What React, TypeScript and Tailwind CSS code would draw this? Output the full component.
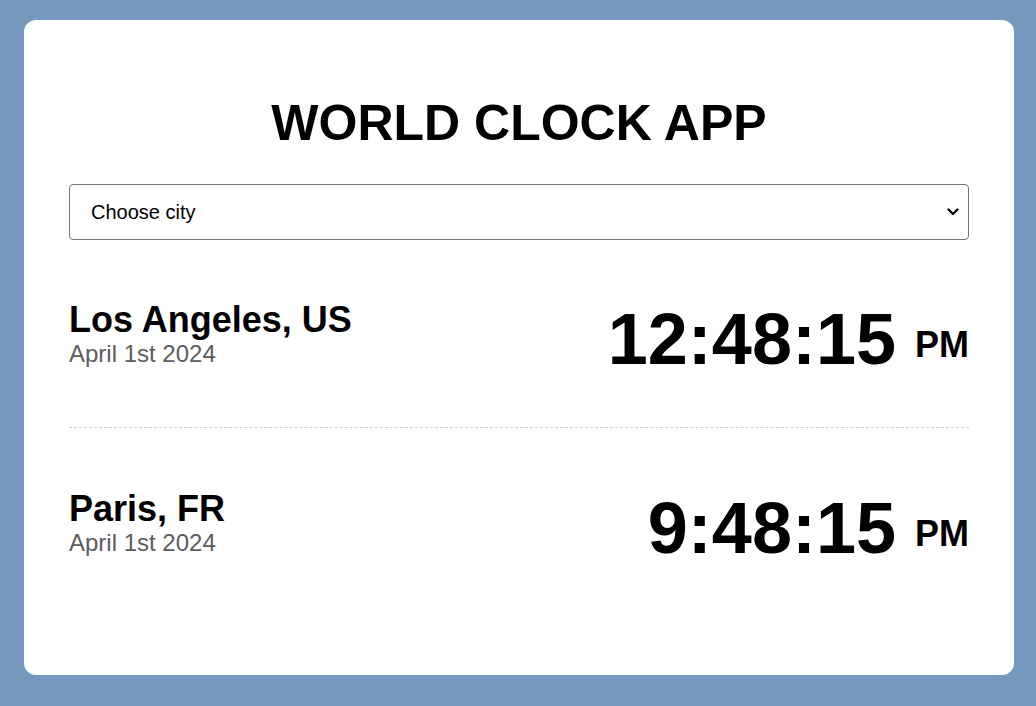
import React from 'react';

const cities = [
  { name: 'Los Angeles, US', date: 'April 1st 2024', time: '12:48:15', ampm: 'PM' },
  { name: 'Paris, FR', date: 'April 1st 2024', time: '9:48:15', ampm: 'PM' },
];

export default function App() {
  return (
    <div className="min-h-[706px] bg-[#7499bc] pt-5 pl-6 pr-[22px] font-['Liberation_Sans',Arial,sans-serif] text-black">
      <div className="h-[655px] rounded-xl bg-white px-[45px] pt-[75px]">
        <h1 className="text-center text-[50px] font-bold leading-[57.5px] tracking-normal">WORLD CLOCK APP</h1>

        <div className="relative mt-[31px]">
          <select
            defaultValue=""
            className="block h-[56px] w-full appearance-none rounded-[4px] border border-[#767676] bg-white pl-[21px] pr-10 text-[20px] text-black"
          >
            <option value="">Choose city</option>
            <option value="tokyo">Tokyo</option>
            <option value="sydney">Sydney</option>
          </select>
          <svg
            className="pointer-events-none absolute right-[10px] top-[24px]"
            width="12"
            height="8"
            viewBox="0 0 12 8"
            fill="none"
          >
            <path d="M1.5 1.5 L6 6 L10.5 1.5" stroke="#000" strokeWidth="2.2" strokeLinecap="round" strokeLinejoin="round" />
          </svg>
        </div>

        <div>
          {cities.map((c, i) => (
            <div
              key={c.name}
              className={
                i === 0
                  ? 'flex items-center justify-between border-b border-dashed border-[#cfcfcf] pt-[57px] pb-[45px]'
                  : 'flex items-center justify-between pt-[58px]'
              }
            >
              <div className="pb-[12px]">
                <div className="text-[36px] font-bold leading-[41.4px]">{c.name}</div>
                <div className="text-[24px] leading-[27.6px] text-[#5c5c5c]">{c.date}</div>
              </div>
              <div className="text-[72px] font-bold leading-[85px] whitespace-nowrap">
                {c.time}
                <span className="ml-[19px] align-[7px] text-[36px] leading-none">{c.ampm}</span>
              </div>
            </div>
          ))}
        </div>
      </div>
    </div>
  );
}
